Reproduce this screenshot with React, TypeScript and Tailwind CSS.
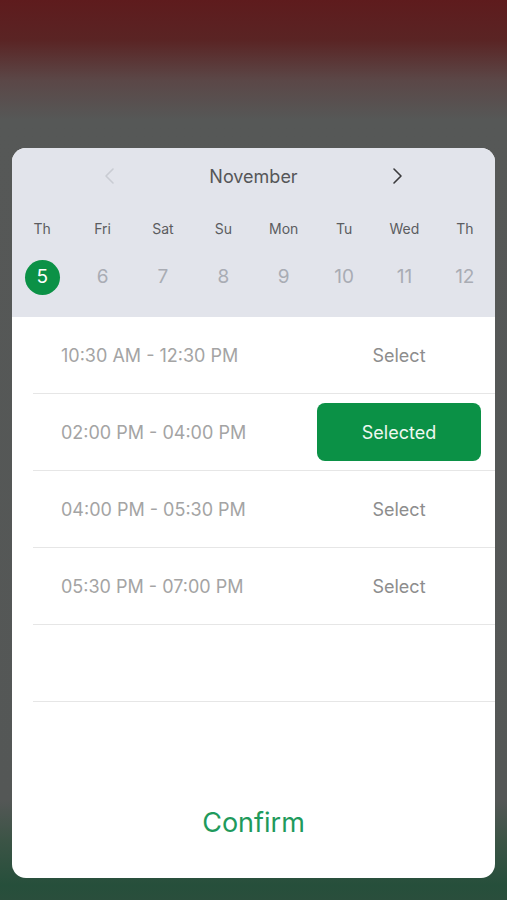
const days = [
  { label: "Th", num: "5" },
  { label: "Fri", num: "6" },
  { label: "Sat", num: "7" },
  { label: "Su", num: "8" },
  { label: "Mon", num: "9" },
  { label: "Tu", num: "10" },
  { label: "Wed", num: "11" },
  { label: "Th", num: "12" },
];

const slots = [
  { time: "10:30 AM - 12:30 PM", selected: false },
  { time: "02:00 PM - 04:00 PM", selected: true },
  { time: "04:00 PM - 05:30 PM", selected: false },
  { time: "05:30 PM - 07:00 PM", selected: false },
];

function Chevron({ dir, className }: { dir: "left" | "right"; className: string }) {
  return (
    <svg width="14" height="18" viewBox="0 0 14 18" fill="none" className={className}>
      <polyline
        points={dir === "left" ? "10,2 3,9 10,16" : "4,2 11,9 4,16"}
        stroke="currentColor"
        strokeWidth="1.6"
        strokeLinecap="round"
        strokeLinejoin="round"
      />
    </svg>
  );
}

export default function App() {
  return (
    <div
      className="h-[900px] w-full bg-[linear-gradient(180deg,#5e1b1d_0px,#5a2424_40px,#5b4747_80px,#565857_120px,#545756_800px,#3c5446_840px,#264f3b_885px,#2a4e3c_900px)] pt-[148px]"
      style={{ fontFamily: "Inter, 'Liberation Sans', sans-serif" }}
    >
      <div className="mx-[12px] flex h-[730px] flex-col overflow-hidden rounded-[14px] bg-white">
        <div className="h-[169px] bg-[#e2e4eb]">
          <div className="flex h-14 items-center justify-between px-[91px]">
            <Chevron dir="left" className="text-[#c9ccd3]" />
            <span className="text-[18px] text-[#555658]">November</span>
            <Chevron dir="right" className="text-[#3a3a3c]" />
          </div>
          <div className="grid grid-cols-8">
            {days.map((d, i) => (
              <div key={i} className="flex flex-col items-center">
                <div className="flex h-12 items-center text-[14px] text-[#5b5c5f]">{d.label}</div>
                <div className="flex h-[50px] items-center">
                  {i === 0 ? (
                    <span className="flex h-[35px] w-[35px] items-center justify-center rounded-full bg-[#0b9146] text-[19px] text-white">
                      {d.num}
                    </span>
                  ) : (
                    <span className="text-[19px] text-[#a9acb4]">{d.num}</span>
                  )}
                </div>
              </div>
            ))}
          </div>
        </div>

        <div className="flex flex-col">
          {[...slots, null].map((s, i) => (
            <div
              key={i}
              className="ml-[21px] flex h-[77px] items-center justify-between border-b border-[#e6e6e6] pl-[28px] pr-[14px]"
            >
              {s && (
                <>
                  <span className="text-[18px] text-[#a4a4a4]">{s.time}</span>
                  {s.selected ? (
                    <span className="flex h-[58px] w-[164px] items-center justify-center rounded-[8px] bg-[#0b9146] text-[18px] text-[#eef8f1]">
                      Selected
                    </span>
                  ) : (
                    <span className="w-[164px] text-center text-[18px] text-[#8d8d8d]">Select</span>
                  )}
                </>
              )}
            </div>
          ))}
        </div>

        <div className="flex flex-1 items-end justify-center pb-[39px]">
          <span className="text-[27px] leading-[32px] text-[#1f9a5c]">Confirm</span>
        </div>
      </div>
    </div>
  );
}
